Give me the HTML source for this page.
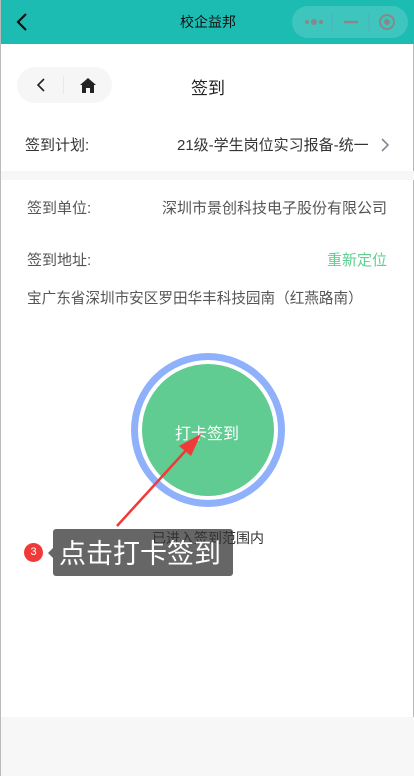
<!DOCTYPE html>
<html><head><meta charset="utf-8"><style>
*{margin:0;padding:0;box-sizing:border-box}
body{width:414px;height:776px;background:#fff;font-family:"Liberation Sans","Noto Sans CJK SC",sans-serif;position:relative;overflow:hidden;border-left:1px solid #bbb;border-right:1px solid #bbb}
.abs{position:absolute}
.top{left:0;top:0;width:414px;height:44px;background:#1dbcb3}
.cap{left:291px;top:6px;width:116px;height:32px;border-radius:16px;background:#3ec6be}
.t{white-space:nowrap}
</style></head><body>
<div class="abs top"></div>
<svg class="abs" style="left:14px;top:12px" width="14" height="20"><path d="M11 2 L3 10 L11 18" fill="none" stroke="#111" stroke-width="2.2"/></svg>
<div class="abs t" style="left:0;width:414px;top:12px;text-align:center;font-size:14px;color:#111">校企益邦</div>
<div class="abs cap"></div>
<svg class="abs" style="left:291px;top:6px" width="116" height="32">
<circle cx="15" cy="16" r="2" fill="#888"/><circle cx="22" cy="16" r="3" fill="#888"/><circle cx="29" cy="16" r="2" fill="#888"/>
<line x1="40" y1="7" x2="40" y2="25" stroke="#5ab" stroke-width="1"/>
<line x1="52" y1="16" x2="66" y2="16" stroke="#888" stroke-width="2.5"/>
<line x1="77" y1="7" x2="77" y2="25" stroke="#5ab" stroke-width="1"/>
<circle cx="95" cy="16" r="7" fill="none" stroke="#888" stroke-width="2"/><circle cx="95" cy="16" r="3" fill="#888"/>
</svg>
<div class="abs" style="left:16px;top:67px;width:95px;height:36px;border-radius:18px;background:#f6f6f6"></div>
<svg class="abs" style="left:34px;top:77px" width="12" height="16"><path d="M9 2 L3 8 L9 14" fill="none" stroke="#222" stroke-width="1.6"/></svg>
<div class="abs" style="left:62px;top:76px;width:1px;height:18px;background:#e8e8e8"></div>
<svg class="abs" style="left:79px;top:78px" width="16" height="15"><path d="M8 0 L16 7 L14 7 L14 15 L10 15 L10 10 L6 10 L6 15 L2 15 L2 7 L0 7 Z" fill="#222"/></svg>
<div class="abs t" style="left:190px;top:74px;font-size:17px;color:#222">签到</div>
<div class="abs t" style="left:24px;top:134px;font-size:15px;color:#333">签到计划:</div>
<div class="abs t" style="left:176px;top:134px;font-size:15px;color:#333">21级-学生岗位实习报备-统一</div>
<svg class="abs" style="left:379px;top:137px" width="10" height="16"><path d="M2 2 L8 8 L2 14" fill="none" stroke="#889" stroke-width="1.6"/></svg>
<div class="abs" style="left:0;top:171px;width:414px;height:9px;background:#f7f7f7"></div>
<div class="abs t" style="left:26px;top:197px;font-size:15px;color:#555">签到单位:</div>
<div class="abs t" style="right:26px;top:197px;font-size:15px;color:#555">深圳市景创科技电子股份有限公司</div>
<div class="abs t" style="left:26px;top:249px;font-size:15px;color:#555">签到地址:</div>
<div class="abs t" style="right:26px;top:249px;font-size:15px;color:#5fcf8f">重新定位</div>
<div class="abs t" style="left:26px;top:287px;font-size:14.6px;color:#555">宝广东省深圳市安区罗田华丰科技园南（红燕路南）</div>
<div class="abs" style="left:130px;top:353px;width:154px;height:154px;border-radius:50%;background:#8fb1fb"></div>
<div class="abs" style="left:137px;top:360px;width:140px;height:140px;border-radius:50%;background:#fff"></div>
<div class="abs" style="left:141px;top:364px;width:132px;height:132px;border-radius:50%;background:#61cc91"></div>
<div class="abs t" style="left:174px;top:420px;font-size:16px;color:#fff">打卡签到</div>
<svg class="abs" style="left:0;top:0" width="414" height="776"><line x1="116" y1="526" x2="188" y2="447" stroke="#f03a3a" stroke-width="2.5"/><path d="M200 434 L178 446 L190 456 Z" fill="#f03a3a"/></svg>
<div class="abs" style="left:52px;top:529px;width:180px;height:47px;border-radius:3px;background:#666"></div>
<div class="abs t" style="left:151px;top:528px;font-size:14px;color:#333">已进入签到范围内</div>
<div class="abs" style="left:47px;top:548px;width:0;height:0;border-top:5px solid transparent;border-bottom:5px solid transparent;border-right:5px solid #666"></div>
<div class="abs t" style="left:58px;top:536px;font-size:27px;color:#fff;line-height:36px">点击打卡签到</div>
<div class="abs" style="left:23px;top:543px;width:19px;height:19px;border-radius:50%;background:#f03a3a;color:#fff;font-size:11px;text-align:center;line-height:19px">3</div>
<div class="abs" style="left:0;top:717px;width:414px;height:59px;background:#f7f7f7"></div>
</body></html>
